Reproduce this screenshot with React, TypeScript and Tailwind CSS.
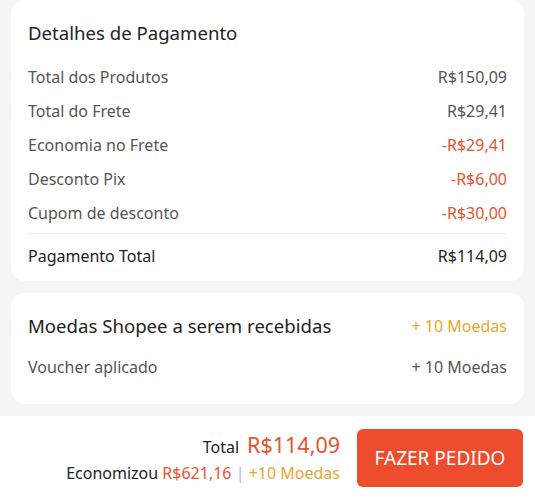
const rows = [
  { label: 'Total dos Produtos', value: 'R$150,09', red: false },
  { label: 'Total do Frete', value: 'R$29,41', red: false },
  { label: 'Economia no Frete', value: '-R$29,41', red: true },
  { label: 'Desconto Pix', value: '-R$6,00', red: true },
  { label: 'Cupom de desconto', value: '-R$30,00', red: true },
];

export default function App() {
  return (
    <div
      className="w-[535px] h-[500px] bg-[#f5f5f5] flex flex-col overflow-hidden"
      style={{ fontFamily: '"Noto Sans", Roboto, sans-serif' }}
    >
      {/* detalhes */}
      <div className="mx-[11px] h-[281px] bg-white rounded-[14px] px-[17px] pt-[19px] pb-[8px]">
        <h2 className="text-[18.6px] leading-[28px] text-[#222]">Detalhes de Pagamento</h2>
        <div className="mt-[13px]">
          {rows.map((r) => (
            <div key={r.label} className="h-[34px] flex items-center justify-between text-[16px]">
              <span className="text-[#555]">{r.label}</span>
              <span className={r.red ? 'text-[#e6532f]' : 'text-[#555]'}>{r.value}</span>
            </div>
          ))}
        </div>
        <div className="mt-[3px] border-t border-[#ebebeb]" />
        <div className="mt-[5px] h-[34px] flex items-center justify-between text-[16px] text-[#222]">
          <span>Pagamento Total</span>
          <span>R$114,09</span>
        </div>
      </div>

      {/* moedas */}
      <div className="mx-[11px] mt-[12px] h-[111px] bg-white rounded-[14px] px-[17px] pt-[19px]">
        <div className="h-[28px] flex items-center justify-between">
          <span className="text-[18.6px] text-[#222]">Moedas Shopee a serem recebidas</span>
          <span className="text-[16px] text-[#eba52e]">+ 10 Moedas</span>
        </div>
        <div className="mt-[10px] h-[34px] flex items-center justify-between text-[16px] text-[#555]">
          <span>Voucher aplicado</span>
          <span>+ 10 Moedas</span>
        </div>
      </div>

      {/* rodape */}
      <div className="mt-[12px] flex-1 bg-white flex items-start justify-end pr-[12px] pt-[13px] gap-[17px]">
        <div className="flex flex-col items-end">
          <div className="flex items-baseline gap-[8px] h-[32px]">
            <span className="text-[16px] text-[#222]">Total</span>
            <span className="text-[21.5px] text-[#e6532f]">R$114,09</span>
          </div>
          <div className="text-[16px] leading-[24px] text-[#222]">
            Economizou <span className="text-[#e6532f]">R$621,16</span>{' '}
            <span className="text-[#bbb]">|</span>{' '}
            <span className="text-[#eba52e]">+10 Moedas</span>
          </div>
        </div>
        <button className="w-[166px] h-[58px] rounded-[6px] bg-[#ee4d2d] text-white text-[19px]">
          FAZER PEDIDO
        </button>
      </div>
    </div>
  );
}
